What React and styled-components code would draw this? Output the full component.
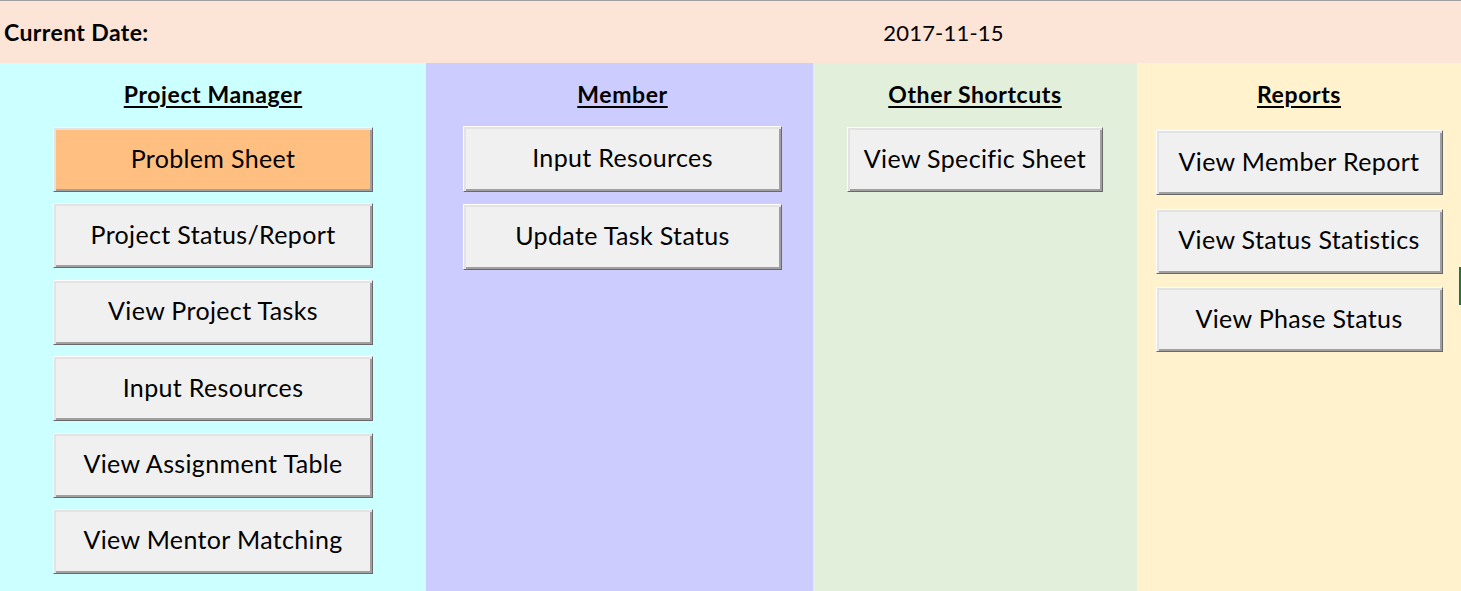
import React from 'react'
import styled, {createGlobalStyle} from 'styled-components'

const GlobalStyle = createGlobalStyle`
  html, body {
    margin: 0;
    padding: 0;
    background: #ffffff;
  }
  body {
    font-family: Lato, "Open Sans", "Liberation Sans", sans-serif;
    color: #000;
  }
`

const Sheet = styled.div`
  width: 1461px;
  height: 591px;
  overflow: hidden;
  display: flex;
  flex-direction: column;
  position: relative;
`

const HeaderBar = styled.div`
  display: grid;
  grid-template-columns: 426px 1fr;
  align-items: center;
  height: 62px;
  border-top: 1px solid #a0a0a0;
  background-color: #fce4d6;
`

const DateLabel = styled.div`
  padding-left: 4px;
  font-size: 23px;
  font-weight: bold;
  letter-spacing: 0.4px;
`

const DateValue = styled.div`
  text-align: center;
  font-size: 22px;
  letter-spacing: 0.2px;
`

const Columns = styled.div`
  flex: 1;
  display: grid;
  grid-template-columns: 426px 387px 324px 324px;
`

const Column = styled.div`
  background-color: ${props => props.bg};
  display: flex;
  flex-direction: column;
  align-items: center;
  padding-top: 18px;
  padding-left: ${props => props.shift || 0}px;
`

const Title = styled.h3`
  margin: 0;
  font-size: 23px;
  line-height: 26px;
  font-weight: bold;
  letter-spacing: 0.6px;
  text-decoration: underline;
  text-decoration-thickness: 2px;
  text-underline-offset: 3px;
`

const ButtonList = styled.div`
  display: flex;
  flex-direction: column;
  gap: ${props => props.gap}px;
  margin-top: ${props => props.top}px;
`

const Button = styled.button`
  width: ${props => props.w}px;
  height: ${props => props.h}px;
  padding: 0 0 4px;
  font-family: inherit;
  font-size: 25px;
  letter-spacing: 0.35px;
  color: #000;
  background-color: ${props => props.active ? '#ffbf80' : '#f0f0f0'};
  border: none;
  border-top: 1px solid #ffffff;
  border-left: 1px solid #ffffff;
  border-right: 1px solid #696969;
  border-bottom: 1px solid #696969;
  box-shadow: inset 2px 2px 0 #e3e3e3, inset -2px -2px 0 #a0a0a0;
  cursor: pointer;
`

const SelectionMark = styled.div`
  position: absolute;
  left: 1459px;
  top: 267px;
  width: 2px;
  height: 38px;
  background-color: #217346;
`

const sections = [
    {
        title: 'Project Manager', bg: '#ccffff', w: 320, h: 65, gap: 11.4, top: 20,
        items: ['Problem Sheet', 'Project Status/Report', 'View Project Tasks', 'Input Resources', 'View Assignment Table', 'View Mentor Matching'],
        active: 0
    },
    {
        title: 'Member', bg: '#ccccff', w: 319, h: 66, gap: 12, top: 19, shift: 6,
        items: ['Input Resources', 'Update Task Status']
    },
    {
        title: 'Other Shortcuts', bg: '#e2efda', w: 256, h: 65, gap: 12, top: 20, shift: -3,
        items: ['View Specific Sheet']
    },
    {
        title: 'Reports', bg: '#fff2cc', w: 287, h: 65, gap: 13.5, top: 23,
        items: ['View Member Report', 'View Status Statistics', 'View Phase Status']
    }
]

export default function App() {
    return (
        <>
            <GlobalStyle/>
            <Sheet>
                <HeaderBar>
                    <DateLabel>Current Date:</DateLabel>
                    <DateValue>2017-11-15</DateValue>
                </HeaderBar>
                <Columns>
                    {sections.map(section => (
                        <Column key={section.title} bg={section.bg} shift={section.shift}>
                            <Title>{section.title}</Title>
                            <ButtonList gap={section.gap} top={section.top}>
                                {section.items.map((item, i) => (
                                    <Button key={item} w={section.w} h={section.h} active={section.active === i}>
                                        {item}
                                    </Button>
                                ))}
                            </ButtonList>
                        </Column>
                    ))}
                </Columns>
                <SelectionMark/>
            </Sheet>
        </>
    )
}
